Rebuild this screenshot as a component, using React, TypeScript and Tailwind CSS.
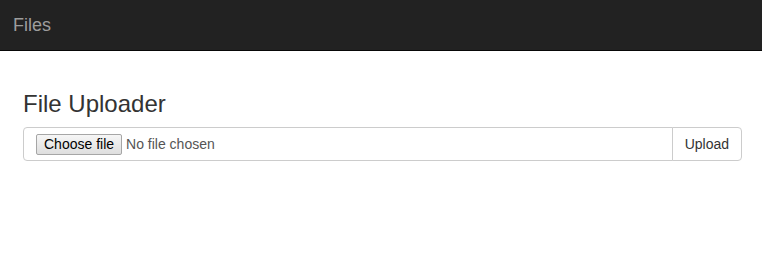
import React from "react";

export default function App() {
  return (
    <div className="min-h-[259px] bg-white" style={{ fontFamily: '"Liberation Sans", Arial, sans-serif' }}>
      <nav className="h-[51px] bg-[#222222] border-b border-[#080808] flex items-center px-[13px]">
        <span className="text-[18px] leading-[20px] text-[#9d9d9d]">Files</span>
      </nav>
      <div className="pl-[23px] pr-[20px]">
        <h3 className="mt-[40px] mb-[10px] text-[24px] leading-[26.4px] text-[#333333] font-normal">File Uploader</h3>
        <div className="flex h-[34px]">
          <label className="flex-1 flex items-center border border-[#cccccc] rounded-l-[4px] pl-[12px] text-[14px] text-[#555555]">
            <span className="h-[21px] px-[7px] flex items-center border border-[#a6a6a6] rounded-[2px] bg-gradient-to-b from-[#f6f6f6] to-[#dedede] text-black text-[14px] leading-none">
              Choose file
            </span>
            <span className="ml-[4px]">No file chosen</span>
          </label>
          <button className="-ml-px border border-[#cccccc] rounded-r-[4px] bg-white px-[12px] text-[14px] text-[#333333]">
            Upload
          </button>
        </div>
      </div>
    </div>
  );
}
